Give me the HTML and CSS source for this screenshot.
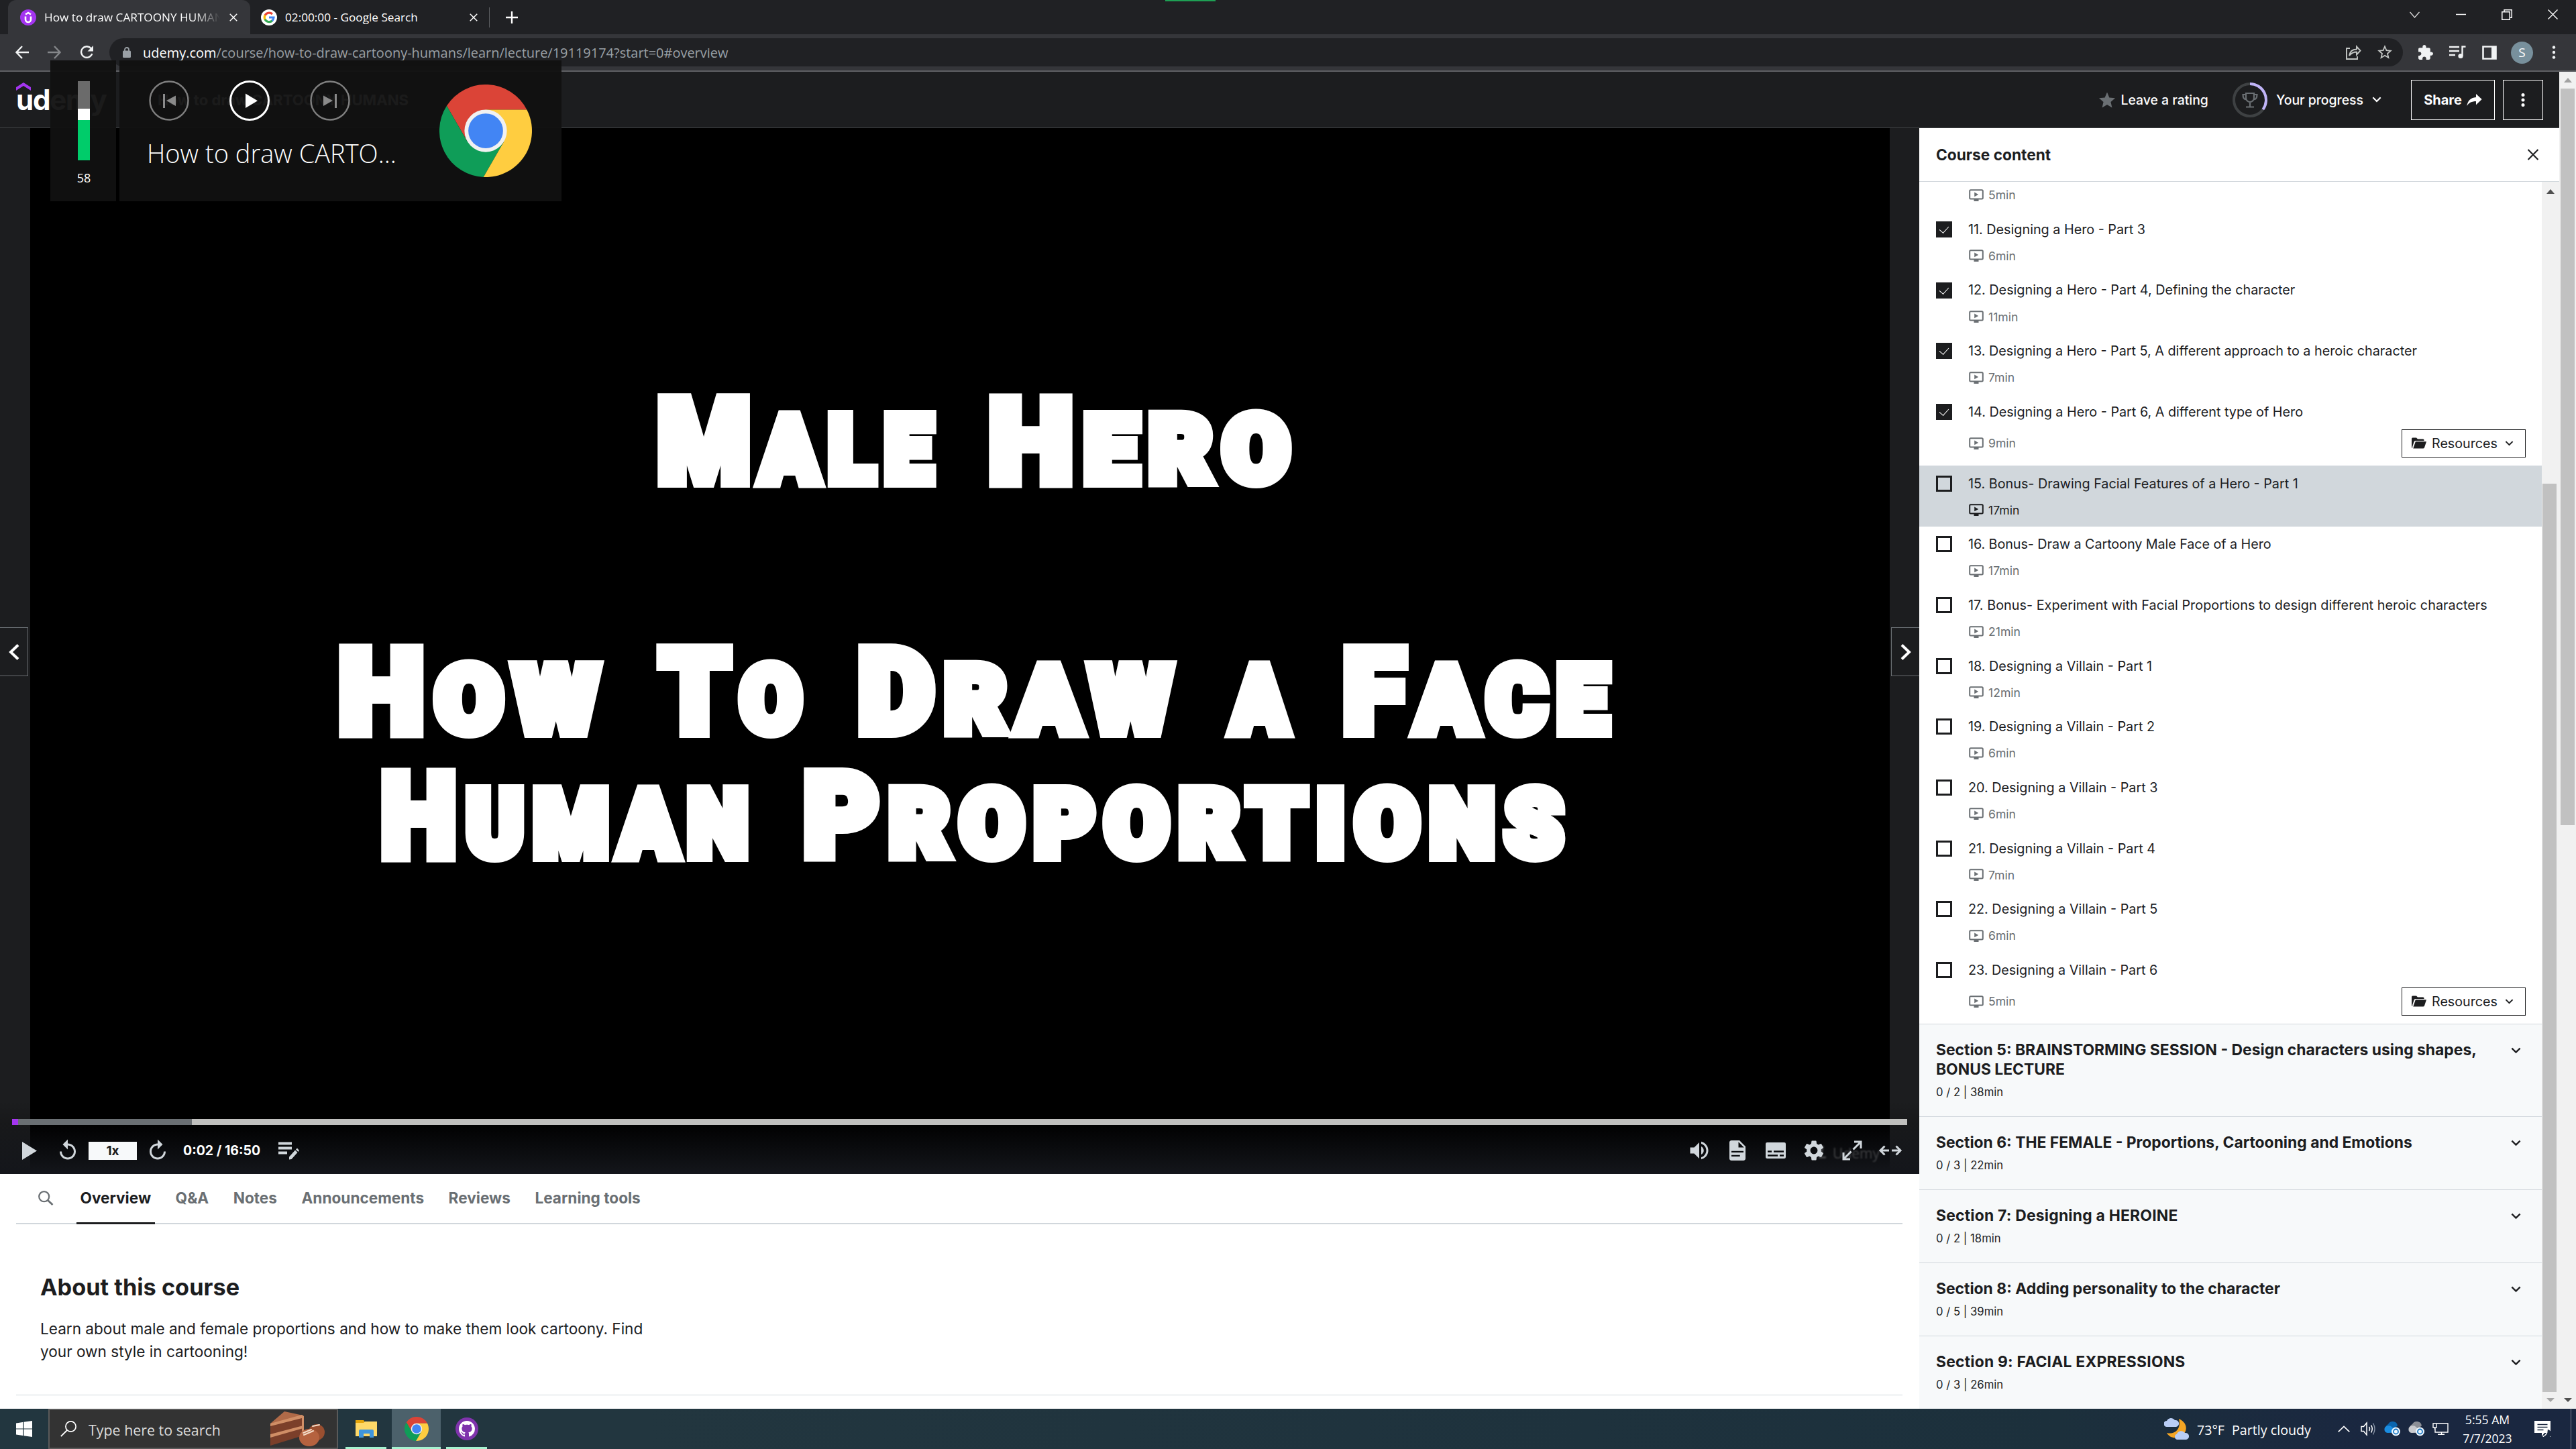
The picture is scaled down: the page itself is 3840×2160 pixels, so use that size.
FILE: index.html
```html
<!DOCTYPE html>
<html lang="en">
<head>
<meta charset="utf-8">
<title>How to draw CARTOONY HUMANS</title>
<link rel="stylesheet" href="styles.css">
</head>
<body>
<svg class="defs" width="0" height="0" aria-hidden="true">
  <symbol id="chrome" viewBox="-24 -24 48 48">
    <path fill="#db4437" d="M21.33-11A24 24 0 0 0-20.2-12.97L-9.53 5.5 0 0 0-11z"/>
    <path fill="#0f9d58" d="M-20.2-12.97A24 24 0 0 0-1.13 23.97L9.53 5.5 0 0-9.53 5.5z"/>
    <path fill="#ffcd40" d="M-1.13 23.97A24 24 0 0 0 21.33-11H0V0l9.53 5.5z"/>
    <circle r="11" fill="#f1f1f1"/><circle r="9" fill="#4285f4"/>
  </symbol>
  <symbol id="lecture" viewBox="0 0 22 18"><rect x="1.2" y="1.2" width="19.6" height="13.2" rx="1.5" fill="none" stroke="currentColor" stroke-width="2"/><path d="M8.2 4.5v6.800l6-3.400zM7.500 15h7v3h-7z" fill="currentColor"/></symbol>
  <symbol id="chev" viewBox="0 0 14 9"><path d="M1.3 1.3 7 7l5.700-5.700" fill="none" stroke="currentColor" stroke-width="2.200"/></symbol>
  <symbol id="folder" viewBox="0 0 22 17"><path fill="currentColor" d="M0 15V2Q0 .5 1.500 .5H7l2 2h8q1.500 0 1.500 1.500v1H5.500Q4.200 5 3.600 6.500L1.200 14v2zM5.800 6.300H22L19 15.200Q18.500 16.500 17 16.500H2.300z"/></symbol>
  <symbol id="cross" viewBox="0 0 16 16"><path d="M1 1l14 14M15 1 1 15" fill="none" stroke="currentColor" stroke-width="2"/></symbol>
  <symbol id="replay" viewBox="0 0 24 24"><path fill="currentColor" d="M12 5V1L7 6l5 5V7c3.310 0 6 2.690 6 6s-2.690 6-6 6-6-2.690-6-6H4c0 4.420 3.580 8 8 8s8-3.580 8-8-3.580-8-8-8z"/></symbol>
</svg>

<div class="browser">
  <div class="tabstrip">
    <div class="tab active">
      <svg class="fav" viewBox="0 0 24 24"><circle cx="12" cy="12" r="12" fill="#a435f0"/><path d="M8 7.500 12 5l4 2.500M8 10.500V15a4 4 0 0 0 8 0V10.500" fill="none" stroke="#fff" stroke-width="2.600"/></svg>
      <span class="tab-title fade">How to draw CARTOONY HUMANS</span>
      <svg class="x"><use href="#cross"/></svg>
    </div>
    <div class="tab">
      <svg class="fav" viewBox="0 0 24 24"><circle cx="12" cy="12" r="12" fill="#fff"/><g fill="none" stroke-width="3.200"><path d="M6 9a7 7 0 0 1 11-2" stroke="#ea4335"/><path d="M6.200 15.500a7 7 0 0 1 0-7" stroke="#fbbc05"/><path d="M17 16.800a7 7 0 0 1-11-2" stroke="#34a853"/><path d="M12 12h7a7 7 0 0 1-2.300 5" stroke="#4285f4"/></g></svg>
      <span class="tab-title">02:00:00 - Google Search</span>
      <svg class="x"><use href="#cross"/></svg>
    </div>
    <svg class="plus" viewBox="0 0 18 18"><path d="M9 0v18M0 9h18" stroke="#fff" stroke-width="2.400"/></svg>
    <div class="window-buttons">
      <svg width="15" height="10" viewBox="0 0 15 10"><path d="M.5 1 7.500 9l7-8" fill="none" stroke="#ddd" stroke-width="1.300"/></svg>
      <svg width="15" height="15" viewBox="0 0 15 15"><path d="M0 7.500h15" stroke="#fff" stroke-width="1.500"/></svg>
      <svg width="16" height="16" viewBox="0 0 16 16"><path d="M.8 3.800h11.400v11.400H.8zM4 3.500V.8h11.200v11.400H12.500" fill="none" stroke="#fff" stroke-width="1.500"/></svg>
      <svg width="15" height="15" viewBox="0 0 15 15"><path d="M.5.5l14 14M14.500.5l-14 14" stroke="#fff" stroke-width="1.400"/></svg>
    </div>
  </div>
  <div class="toolbar">
    <svg class="nav-ic" viewBox="0 0 20 20"><path d="M20 10H2M10 1 1.500 10 10 19" fill="none" stroke="#f1f3f4" stroke-width="2.400"/></svg>
    <svg class="nav-ic" viewBox="0 0 20 20"><path d="M0 10h18M10 1l8.500 9L10 19" fill="none" stroke="#85878a" stroke-width="2.400"/></svg>
    <svg class="nav-ic" viewBox="0 0 20 20"><path d="M16.800 4.200A8.300 8.300 0 1 0 18.300 12" fill="none" stroke="#f1f3f4" stroke-width="2.400"/><path d="M20 0v8.500h-8.500z" fill="#f1f3f4"/></svg>
    <div class="omnibox">
      <svg class="lock" viewBox="0 0 12 16"><rect y="5.500" width="12" height="10.500" rx="1.500" fill="#9aa0a6"/><path d="M3 6V4a3 3 0 0 1 6 0v2" fill="none" stroke="#9aa0a6" stroke-width="1.800"/></svg>
      <span class="url"><b>udemy.com</b>/course/how-to-draw-cartoony-humans/learn/lecture/19119174?start=0#overview</span>
      <svg class="om-ic" viewBox="0 0 24 24"><path d="M7 6H2v16h16v-4M6 17c1-7 5-9.500 11-9.500V3.500l5.500 6-5.500 6v-4C12 11.500 9 13 6 17z" fill="none" stroke="#c4c7c5" stroke-width="1.900"/></svg>
      <svg class="om-ic star" viewBox="1 1 22 22"><path fill="#c4c7c5" d="M22 9.240l-7.190-.62L12 2 9.190 8.630 2 9.240l5.460 4.730L5.820 21 12 17.270 18.180 21l-1.630-7.030L22 9.240zM12 15.400l-3.760 2.270 1-4.280-3.320-2.880 4.380-.38L12 6.100l1.710 4.040 4.380.38-3.320 2.880 1 4.280L12 15.400z"/></svg>
    </div>
    <div class="ext">
      <svg width="24" height="24" viewBox="1 0 23 23"><path fill="#f1f3f4" d="M20.500 11H19V7c0-1.100-.9-2-2-2h-4V3.500C13 2.120 11.880 1 10.500 1S8 2.120 8 3.500V5H4c-1.100 0-1.990.9-1.990 2v3.800H3.500c1.490 0 2.700 1.210 2.700 2.700s-1.210 2.700-2.700 2.700H2V20c0 1.100.9 2 2 2h3.800v-1.500c0-1.490 1.210-2.700 2.700-2.700 1.490 0 2.700 1.210 2.700 2.700V22H17c1.100 0 2-.9 2-2v-4h1.500c1.380 0 2.500-1.120 2.500-2.500S21.880 11 20.500 11z"/></svg>
      <svg width="25" height="20" viewBox="0 0 25 20"><path d="M0 2h15M0 8h15M0 14h9M24.500 1.500H19.500V15" fill="none" stroke="#f1f3f4" stroke-width="2.400"/><circle cx="17" cy="15.500" r="3.600" fill="#f1f3f4"/></svg>
      <svg width="22" height="21" viewBox="0 0 22 21"><path d="M1.500 1.500h19v18h-19z" fill="none" stroke="#f1f3f4" stroke-width="2.600"/><path d="M14 1h7v19h-7z" fill="#f1f3f4"/></svg>
      <span class="avatar">S</span>
      <svg width="6" height="20" viewBox="0 0 6 20"><g fill="#f1f3f4"><circle cx="3" cy="2.500" r="2.200"/><circle cx="3" cy="10" r="2.200"/><circle cx="3" cy="17.500" r="2.200"/></g></svg>
    </div>
  </div>
</div>

<div class="viewport">
  <div class="page">
    <header class="course-header">
      <div class="logo">udemy<svg class="hat" viewBox="0 0 22 12"><path d="M0 12V7L11 0l11 7v5L11 5z" fill="#a435f0"/></svg></div>
      <div class="course-title">How to draw CARTOONY HUMANS</div>
      <div class="rating"><svg width="24" height="24" viewBox="2 1.500 20 20"><path fill="#6a6f73" d="M12 17.270L18.180 21l-1.640-7.030L22 9.240l-7.190-.61L12 2 9.190 8.630 2 9.240l5.460 4.730L5.820 21z"/></svg>Leave a rating</div>
      <div class="progress"><svg width="52" height="52" viewBox="-26 -26 52 52"><circle r="24" fill="none" stroke="#3e4143" stroke-width="4"/><path d="M0-24A24 24 0 0 1 19.400 14.100" fill="none" stroke="#c0b4f7" stroke-width="4"/><path d="M-6-10H6V-3a6 6 0 0 1-12 0zM-6-8h-4.500q0 7.500 5.500 7.500M6-8h4.500q0 7.500-5.500 7.500M0 3v7M-6 10.500H6" fill="none" stroke="#6a6f73" stroke-width="2.200"/></svg>Your progress<svg class="chev-p" width="14" height="9"><use href="#chev"/></svg></div>
      <div class="btn share">Share<svg width="23" height="18" viewBox="3 5 18 14.500"><path fill="#fff" d="M14 9V5l7 6.500-7 6.500v-4.100c-5 0-8.500 1.600-11 5.600 1-6 4-10 11-10.500z"/></svg></div>
      <div class="btn more"><svg width="6" height="20" viewBox="0 0 6 20"><g fill="#fff"><circle cx="3" cy="2.500" r="2.500"/><circle cx="3" cy="10" r="2.500"/><circle cx="3" cy="17.500" r="2.500"/></g></svg></div>
    </header>
    <div class="columns">
      <main class="left">
        <section class="player">
          <svg class="stage" viewBox="0 0 2861 1559">
            <rect x="45" width="2772" height="1559" fill="#000"/>
            <g class="lettering">
              <text x="980" y="527" textLength="425" lengthAdjust="spacingAndGlyphs">M<tspan class="sm">ALE</tspan></text>
              <text x="1474" y="527" textLength="465" lengthAdjust="spacingAndGlyphs">H<tspan class="sm">ERO</tspan></text>
              <text x="505" y="900" textLength="404" lengthAdjust="spacingAndGlyphs">H<tspan class="sm">OW</tspan></text>
              <text x="984" y="900" textLength="226" lengthAdjust="spacingAndGlyphs">T<tspan class="sm">O</tspan></text>
              <text x="1279" y="900" textLength="484" lengthAdjust="spacingAndGlyphs">D<tspan class="sm">RAW</tspan></text>
              <text x="1836" y="900" textLength="98" lengthAdjust="spacingAndGlyphs"><tspan class="sm">A</tspan></text>
              <text x="2002" y="900" textLength="411" lengthAdjust="spacingAndGlyphs">F<tspan class="sm">ACE</tspan></text>
              <text x="568" y="1085" textLength="562" lengthAdjust="spacingAndGlyphs">H<tspan class="sm">UMAN</tspan></text>
              <text x="1198" y="1085" textLength="1148" lengthAdjust="spacingAndGlyphs">P<tspan class="sm">ROPORTIONS</tspan></text>
            </g>
          </svg>
          <div class="go prev"><svg viewBox="0 0 16 24"><path d="M14 1.500 3 12l11 10.500" fill="none" stroke="#fff" stroke-width="4"/></svg></div>
          <div class="go next"><svg viewBox="0 0 16 24"><path d="M2 1.500 13 12 2 22.500" fill="none" stroke="#fff" stroke-width="4"/></svg></div>
          <div class="controls">
            <span class="watermark"><b>L</b>Udemy</span>
            <div class="bar"><i class="played"></i><i class="buffered"></i></div>
            <div class="row">
              <svg class="play" viewBox="0 0 22 27"><path d="M0 0v27l22-13.500z" fill="#d1d7dc"/></svg>
              <svg class="c36 back"><use href="#replay"/></svg>
              <span class="rate">1x</span>
              <svg class="c36 fwd"><use href="#replay"/></svg>
              <span class="time">0:02 / 16:50</span>
              <svg class="note" viewBox="0 0 31 27"><path d="M0 2.500h20M0 9.500h20M0 16.500h13" stroke="#d1d7dc" stroke-width="4"/><path d="M16 26.500v-4l9-10 3.500 3.500-9 10zM26 11.500l2-2 3 3.500-1.500 2z" fill="#d1d7dc"/></svg>
              <div class="right-controls">
                <svg class="c36" viewBox="0 0 24 24"><path fill="#d1d7dc" d="M3 9v6h4l5 5V4L7 9H3zm13.500 3c0-1.770-1.020-3.290-2.500-4.030v8.050c1.480-.73 2.500-2.250 2.500-4.020zM14 3.230v2.060c2.890.86 5 3.540 5 6.710s-2.110 5.850-5 6.710v2.060c4.010-.91 7-4.490 7-8.770s-2.990-7.860-7-8.770z"/></svg>
                <svg class="c36" viewBox="0 0 24 24"><path fill="#d1d7dc" d="M14 2H6c-1.100 0-2 .9-2 2v16c0 1.100.89 2 2 2h12c1.100 0 2-.9 2-2V8l-6-6zM14.500 18H6v-1.500h8.500zM18 14H6v-1.500h12zm-5-5V3.500L18.500 9H13z"/></svg>
                <svg class="c36" viewBox="0 0 24 24"><rect x="2" y="4" width="20" height="16" rx="1.500" fill="#d1d7dc"/><path d="M4 13h4M10 13h10M4 17h10M16 17h4" stroke="#0b0c0f" stroke-width="1.800"/></svg>
                <svg class="c36" viewBox="0 0 24 24"><path fill="#d1d7dc" d="M19.140 12.940c.04-.3.06-.61.06-.94 0-.32-.02-.64-.07-.94l2.030-1.580c.18-.14.23-.41.12-.61l-1.920-3.320c-.12-.22-.37-.29-.59-.22l-2.390.96c-.5-.38-1.030-.7-1.620-.94l-.36-2.540c-.04-.24-.24-.41-.48-.41h-3.840c-.24 0-.43.17-.47.41l-.36 2.540c-.59.24-1.130.57-1.620.94l-2.390-.96c-.22-.08-.47 0-.59.22L2.740 8.870c-.12.21-.08.47.12.61l2.030 1.580c-.05.3-.09.63-.09.94s.02.64.07.94l-2.030 1.580c-.18.14-.23.41-.12.61l1.920 3.320c.12.22.37.29.59.22l2.390-.96c.5.38 1.030.7 1.620.94l.36 2.540c.05.24.24.41.48.41h3.840c.24 0 .44-.17.47-.41l.36-2.540c.59-.24 1.130-.56 1.620-.94l2.390.96c.22.08.47 0 .59-.22l1.920-3.320c.12-.22.07-.47-.12-.61l-2.010-1.580zM12 15.600c-1.980 0-3.600-1.620-3.600-3.600s1.620-3.600 3.600-3.600 3.600 1.620 3.600 3.600-1.620 3.600-3.600 3.600z"/></svg>
                <svg class="c36" viewBox="0 0 36 36"><path d="M21 5h10v10M30.500 5.500 19.500 16.500M15 31H5V21M5.500 30.500l11-11" fill="none" stroke="#d1d7dc" stroke-width="3"/></svg>
                <svg class="c36" viewBox="0 0 36 36"><path d="M16 18H4M9.500 11.500 3 18l6.500 6.500M20 18h12M26.500 11.500 33 18l-6.500 6.500" fill="none" stroke="#d1d7dc" stroke-width="3"/></svg>
              </div>
            </div>
          </div>
        </section>
        <nav class="tabs">
          <svg class="search" viewBox="0 0 23 22"><circle cx="8.700" cy="8.700" r="7.500" fill="none" stroke="#6a6f73" stroke-width="2.200"/><path d="m14 14 7.500 7" stroke="#6a6f73" stroke-width="2.800"/></svg>
          <a class="on">Overview</a><a>Q&amp;A</a><a>Notes</a><a>Announcements</a><a>Reviews</a><a>Learning tools</a>
        </nav>
        <section class="about">
          <h2>About this course</h2>
          <p>Learn about male and female proportions and how to make them look cartoony. Find<br>your own style in cartooning!</p>
        </section>
      </main>
      <aside class="sidebar">
        <div class="side-head">Course content<svg width="18" height="17"><use href="#cross"/></svg></div>
        <div class="side-body">
          <div class="list">
            <div class="item first"><div class="txt"><div class="meta"><svg class="lec"><use href="#lecture"/></svg>5min</div></div></div>
            <div class="item"><i class="box done"></i><div class="txt"><div class="name">11. Designing a Hero - Part 3</div><div class="meta"><svg class="lec"><use href="#lecture"/></svg>6min</div></div></div>
            <div class="item"><i class="box done"></i><div class="txt"><div class="name">12. Designing a Hero - Part 4, Defining the character</div><div class="meta"><svg class="lec"><use href="#lecture"/></svg>11min</div></div></div>
            <div class="item"><i class="box done"></i><div class="txt"><div class="name">13. Designing a Hero - Part 5, A different approach to a heroic character</div><div class="meta"><svg class="lec"><use href="#lecture"/></svg>7min</div></div></div>
            <div class="item"><i class="box done"></i><div class="txt"><div class="name">14. Designing a Hero - Part 6, A different type of Hero</div><div class="meta tall"><svg class="lec"><use href="#lecture"/></svg>9min<span class="res"><svg width="22" height="17"><use href="#folder"/></svg>Resources<svg class="rc"><use href="#chev"/></svg></span></div></div></div>
            <div class="item current"><i class="box"></i><div class="txt"><div class="name">15. Bonus- Drawing Facial Features of a Hero - Part 1</div><div class="meta"><svg class="lec"><use href="#lecture"/></svg>17min</div></div></div>
            <div class="item"><i class="box"></i><div class="txt"><div class="name tight">16. Bonus- Draw a Cartoony Male Face of a Hero</div><div class="meta"><svg class="lec"><use href="#lecture"/></svg>17min</div></div></div>
            <div class="item"><i class="box"></i><div class="txt"><div class="name wide">17. Bonus- Experiment with Facial Proportions to design different heroic characters</div><div class="meta"><svg class="lec"><use href="#lecture"/></svg>21min</div></div></div>
            <div class="item"><i class="box"></i><div class="txt"><div class="name">18. Designing a Villain - Part 1</div><div class="meta"><svg class="lec"><use href="#lecture"/></svg>12min</div></div></div>
            <div class="item"><i class="box"></i><div class="txt"><div class="name">19. Designing a Villain - Part 2</div><div class="meta"><svg class="lec"><use href="#lecture"/></svg>6min</div></div></div>
            <div class="item"><i class="box"></i><div class="txt"><div class="name">20. Designing a Villain - Part 3</div><div class="meta"><svg class="lec"><use href="#lecture"/></svg>6min</div></div></div>
            <div class="item"><i class="box"></i><div class="txt"><div class="name">21. Designing a Villain - Part 4</div><div class="meta"><svg class="lec"><use href="#lecture"/></svg>7min</div></div></div>
            <div class="item"><i class="box"></i><div class="txt"><div class="name">22. Designing a Villain - Part 5</div><div class="meta"><svg class="lec"><use href="#lecture"/></svg>6min</div></div></div>
            <div class="item"><i class="box"></i><div class="txt"><div class="name">23. Designing a Villain - Part 6</div><div class="meta tall"><svg class="lec"><use href="#lecture"/></svg>5min<span class="res"><svg width="22" height="17"><use href="#folder"/></svg>Resources<svg class="rc"><use href="#chev"/></svg></span></div></div></div>
            <div class="sec"><div><h3>Section 5: BRAINSTORMING SESSION - Design characters using shapes,<br>BONUS LECTURE</h3><p>0 / 2 | 38min</p></div><svg class="sc"><use href="#chev"/></svg></div>
            <div class="sec"><div><h3>Section 6: THE FEMALE - Proportions, Cartooning and Emotions</h3><p>0 / 3 | 22min</p></div><svg class="sc"><use href="#chev"/></svg></div>
            <div class="sec"><div><h3 class="wide7">Section 7: Designing a HEROINE</h3><p>0 / 2 | 18min</p></div><svg class="sc"><use href="#chev"/></svg></div>
            <div class="sec"><div><h3>Section 8: Adding personality to the character</h3><p>0 / 5 | 39min</p></div><svg class="sc"><use href="#chev"/></svg></div>
            <div class="sec"><div><h3 class="wide7">Section 9: FACIAL EXPRESSIONS</h3><p>0 / 3 | 26min</p></div><svg class="sc"><use href="#chev"/></svg></div>
          </div>
          <div class="scroll inner"><i class="up dark"></i><i class="thumb"></i><i class="down"></i></div>
        </div>
      </aside>
    </div>
  </div>
  <div class="scroll outer"><i class="up"></i><i class="thumb"></i><i class="down dark"></i></div>
</div>

<div class="taskbar">
  <svg class="start" viewBox="0 0 24 24"><path fill="#fff" d="M0 3.500 10 2v9.400H0zM11.300 1.800 24 0v11.400H11.300zM0 12.600h10V22L0 20.500zM11.300 12.600H24V24l-12.700-1.800z"/></svg>
  <div class="tsearch">
    <svg class="mag" viewBox="0 0 24 24"><circle cx="15.500" cy="8.500" r="7.600" fill="none" stroke="#fff" stroke-width="1.700"/><path d="M10 14 .8 23.200" stroke="#fff" stroke-width="1.800"/></svg>
    <span>Type here to search</span>
    <svg class="cake" viewBox="0 0 83 52"><path fill="#b06a48" d="M1 18 22 0 50 6 1 24z"/><path fill="#7b3f2a" d="M1 21 50 8v28L1 51z"/><path fill="#d08e66" d="M1 18 48 5l3 2v30l-3 1V10L1 22zM1 34l49-13v4L1 39z"/><ellipse cx="70" cy="31" rx="12" ry="12" fill="#9a4f30"/><ellipse cx="59" cy="39" rx="15" ry="13" fill="#b5623f"/><path d="m50 32 12-5M51 35l14-6M64 22l10-2" stroke="#f4dcc8" stroke-width="2" stroke-linecap="round"/></svg>
  </div>
  <div class="app w61"><svg width="32" height="26" viewBox="0 0 32 26"><path fill="#e5a50a" d="M0 0h12l2 3v3H0z"/><path fill="#ffd968" d="M0 4h12l2-2h18v22H0z"/><path fill="#3f95dc" d="M5 26V16q0-2 2-2h18q2 0 2 2v10h-6v-6h-9v6z"/></svg></div>
  <div class="app w73"><svg width="36" height="36"><use href="#chrome"/></svg></div>
  <div class="app w61"><svg width="34" height="34" viewBox="0 0 34 34"><circle cx="17" cy="17" r="17" fill="#7f33ac"/><path transform="translate(5 5) scale(1.500)" fill="#fff" d="M8 0C3.580 0 0 3.580 0 8c0 3.540 2.290 6.530 5.470 7.590.4.070.55-.17.55-.38 0-.19-.01-.82-.01-1.490-2.010.37-2.530-.49-2.690-.94-.09-.23-.48-.94-.82-1.130-.28-.15-.68-.52-.01-.53.63-.01 1.080.58 1.230.82.72 1.210 1.870.87 2.330.66.070-.52.28-.87.51-1.070-1.780-.2-3.640-.89-3.640-3.950 0-.87.31-1.590.82-2.150-.08-.2-.36-1.020.08-2.120 0 0 .67-.21 2.200.82.64-.18 1.320-.27 2-.27.68 0 1.360.09 2 .27 1.530-1.040 2.200-.82 2.200-.82.44 1.100.16 1.920.08 2.120.51.56.82 1.270.82 2.150 0 3.070-1.870 3.750-3.650 3.950.29.25.54.73.54 1.480 0 1.070-.01 1.930-.01 2.200 0 .21.15.46.55.38A8.013 8.013 0 0 0 16 8c0-4.420-3.580-8-8-8z"/></svg></div>
  <div class="tray">
    <svg class="weather" viewBox="0 0 37 34"><path d="M22 2c12 5 14 17 6 24s-20 5-24-3c12 3 22-6 18-21z" fill="#f5a524"/><g fill="#b9cdf5"><path d="M4 14a4.500 4.500 0 0 1 0-9 7 7 0 0 1 12-1 5 5 0 0 1 2 10z"/><path d="M19 33a4.500 4.500 0 0 1 0-8.500 7 7 0 0 1 12-1.500 5 5 0 0 1 2 10z"/></g></svg>
    <span class="temp">73°F</span><span class="cond">Partly cloudy</span>
    <svg class="caret" viewBox="0 0 18 10"><path d="m.7 9.300 8.300-8 8.300 8" fill="none" stroke="#fff" stroke-width="1.600"/></svg>
    <svg class="spk" viewBox="0 0 22 22"><path d="M1 7.500h3.500L9 2v18l-4.500-5.500H1zM12.500 8q2 3 0 6M15.500 5.500q3.500 5.500 0 11" fill="none" stroke="#fff" stroke-width="1.500"/><path d="M18.500 2.500q5 8.500 0 17" fill="none" stroke="#8793a5" stroke-width="1.400"/></svg>
    <svg class="od" viewBox="0 0 24 24"><path fill="#0a64ad" d="M5 14a5 5 0 0 1 1-9A7.500 7.500 0 0 1 20 7l-8 8z"/><path fill="#1a8ce0" d="M5 18a5.300 5.300 0 0 1 0-10.500q4-1 7 2l7 8z"/><circle cx="17.500" cy="16" r="6.500" fill="#eef6fd"/><circle cx="17.500" cy="16" r="3.500" fill="none" stroke="#1a78c4" stroke-width="1.800"/></svg>
    <svg class="od" viewBox="0 0 24 24"><path fill="#8c8f96" d="M5 14a5 5 0 0 1 1-9A7.500 7.500 0 0 1 20 7l-8 8z"/><path fill="#c9cace" d="M5 18a5.300 5.300 0 0 1 0-10.500q4-1 7 2l7 8z"/><circle cx="17.500" cy="16" r="6.500" fill="#eef6fd"/><circle cx="17.500" cy="16" r="3.500" fill="none" stroke="#1a78c4" stroke-width="1.800"/></svg>
    <svg class="mon" viewBox="0 0 24 18"><path d="M6 1h17v13H4V8M13.500 14v3M8 17.300h10M1 1h5v6H1zM3.500 7v3" fill="none" stroke="#fff" stroke-width="1.400"/></svg>
    <div class="clock">5:55 AM<br>7/7/2023</div>
    <svg class="notif" viewBox="0 0 24 24"><path d="M0 0h24v18h-9l-4 5v-5H0z" fill="#fff"/><path d="M4.500 5.500h15M4.500 9.500h15M4.500 13.500h9" stroke="#1b2840" stroke-width="1.500"/><path d="M19 12a7 7 0 1 1-6 11q7-2 6-11z" fill="#1b2840" stroke="#fff" stroke-width="1.300"/></svg>
    <i class="peek"></i>
  </div>
</div>

<div class="green-tick"></div>
<div class="media-flyout">
  <div class="vol"><div class="slider"><i class="rest"></i><i class="knob"></i><i class="level"></i></div><span>58</span></div>
  <div class="media">
    <div class="media-l">
      <div class="btns">
        <svg viewBox="-30 -30 60 60"><circle r="28.500" fill="none" stroke="#7f7f7f" stroke-width="2.400"/><path d="M-9-10h3v21h-3zM10-7.500V8L-4 0z" fill="#8a8a8a"/></svg>
        <svg viewBox="-30 -30 60 60"><circle r="28.500" fill="none" stroke="#fff" stroke-width="3"/><path d="M-6-10.500V11L12 .3z" fill="#fff"/></svg>
        <svg viewBox="-30 -30 60 60"><circle r="28.500" fill="none" stroke="#7f7f7f" stroke-width="2.400"/><path d="M7-10h3v21H7zM-10-7.500V8L4 0z" fill="#8a8a8a"/></svg>
      </div>
      <div class="track">How to draw CARTO...</div>
    </div>
    <svg class="big" width="138" height="138"><use href="#chrome"/></svg>
  </div>
</div>
</body>
</html>
```
FILE: styles.css
```css
* { box-sizing: border-box; }
body { margin: 0; width: 3840px; height: 2160px; overflow: hidden; display: flex; flex-direction: column; position: relative; background: #fff; color: #1c1d1f; font-family: Inter, "Liberation Sans", sans-serif; }
svg { display: block; flex: none; }
.defs { position: absolute; }
h2, h3, p { margin: 0; }

/* browser chrome */
.browser { flex: none; font-family: "Open Sans", "Noto Sans", sans-serif; color: #fff; }
.tabstrip { height: 51px; background: #202124; display: flex; align-items: center; padding-left: 12px; }
.tab { height: 51px; width: 359px; display: flex; align-items: center; padding: 0 19px 0 18px; font-size: 17.2px; }
.tab.active { width: 361px; background: #35363a; border-radius: 12px 12px 0 0; }
.tab + .tab { border-right: 1.5px solid #4d4f54; border-image: linear-gradient(transparent 22%, #5b5d61 22%, #5b5d61 80%, transparent 80%) 1; padding-left: 16px; padding-right: 17px; width: 357px; }
.fav { width: 24px; height: 24px; margin-right: 12px; }
.tab-title { flex: 1; white-space: nowrap; overflow: hidden; line-height: 28px; }
.fade { margin-right: 14px; -webkit-mask-image: linear-gradient(90deg, #000 85%, transparent); mask-image: linear-gradient(90deg, #000 85%, transparent); }
.x { width: 12px; height: 12px; }
.plus { width: 18px; height: 18px; margin-left: 24px; }
.window-buttons { margin-left: auto; display: flex; align-items: center; gap: 53px; padding-right: 27px; height: 43px; align-self: flex-start; }
.window-buttons svg:first-child { margin-right: 1px; }
.toolbar { height: 56px; background: #35363a; border-bottom: 2px solid #5f6064; display: flex; align-items: center; padding-left: 23px; }
.nav-ic { width: 20px; height: 20px; margin-right: 28px; }
.nav-ic:nth-child(3) { margin-right: 24px; }
.omnibox { width: 3419px; height: 42px; border-radius: 21px; background: #202124; display: flex; align-items: center; padding: 0 15px 0 20px; }
.lock { width: 12px; height: 16px; margin-right: 18px; }
.url { font-size: 19.98px; color: #9aa0a6; flex: 1; line-height: 30px; padding-top: 1px; }
.url b { font-weight: 400; color: #fff; }
.om-ic { width: 24px; height: 24px; margin-left: 23px; }
.ext { display: flex; align-items: center; padding-left: 22px; }
.ext svg:nth-child(2) { margin: 0 24px 0 23px; }
.avatar { width: 33px; height: 33px; border-radius: 50%; background: #78909c; margin: 0 28px 0 21px; font-size: 19px; line-height: 32px; text-align: center; }

/* page */
.viewport { height: 1993px; display: flex; }
.page { width: 3815px; display: flex; flex-direction: column; }
.course-header { height: 84px; background: #1c1d1f; border-bottom: 1px solid #3e4143; color: #fff; display: flex; align-items: center; padding: 0 24px; font-size: 19.4px; font-weight: 500; }
.logo { width: 136px; font-size: 42px; font-weight: 700; letter-spacing: -1.2px; line-height: 50px; position: relative; margin-right: 75px; }
.hat { position: absolute; left: 0; top: -1px; width: 22px; height: 12px; }
.course-title { font-size: 22.1px; font-weight: 700; flex: 1; }
.rating { display: flex; align-items: center; gap: 9px; margin-right: 36px; }
.progress { display: flex; align-items: center; gap: 13px; margin-right: 44px; }
.rating { margin-left: -2px; }
.btn { height: 60px; border: 1px solid #fff; display: flex; align-items: center; justify-content: center; }
.share { width: 125px; gap: 7px; font-weight: 700; font-size: 20px; margin-right: 12px; }
.more { width: 60px; }
.columns { display: flex; height: 1909px; }
.left { width: 2861px; }

.player { position: relative; height: 1559px; background: #1c1d1f; overflow: hidden; }
.stage { width: 2861px; height: 1559px; }
.lettering { fill: #fff; stroke: #fff; stroke-width: 18; stroke-linejoin: miter; stroke-miterlimit: 2; font: 900 172px Roboto, sans-serif; letter-spacing: 17px; }
.lettering .sm { font-size: 137px; }
.go { position: absolute; top: 744px; width: 43px; height: 73px; border: 1px solid #6a6f73; background: #1c1d1f; display: flex; align-items: center; justify-content: center; }
.go svg { width: 16px; height: 24px; }
.prev { left: -1px; }
.next { right: -1px; }
.controls { position: absolute; left: 0; right: 0; bottom: 0; height: 110px; background: linear-gradient(rgba(0,0,0,0) 0, rgba(0,0,0,.15) 30%, #14161b 100%); }
.bar { margin: 28px 18px 0; height: 9px; background: #c0c0be; display: flex; }
.played { width: 9px; background: #a435f0; }
.buffered { width: 259px; background: #6a6f73; }
.row { position: relative; height: 36px; margin-top: 20px; padding: 0 25px 0 33px; display: flex; align-items: center; }
.play { width: 22px; height: 27px; margin-right: 28px; }
.c36 { width: 36px; height: 36px; color: #d1d7dc; }
.rate { width: 72px; height: 27px; margin: 0 13px; background: #f7f9fa; color: #1c1d1f; font-size: 19px; font-weight: 700; line-height: 27px; text-align: center; }
.fwd { transform: scaleX(-1); }
.time { margin: 0 27px 0 20px; width: 115px; color: #fff; font-size: 19.5px; font-weight: 700; white-space: nowrap; }
.note { width: 31px; height: 27px; }
.right-controls { margin-left: auto; display: flex; gap: 21px; }
.watermark { position: absolute; right: 59px; bottom: 16px; font: 500 21px/30px "Open Sans", sans-serif; color: #fff; opacity: .2; filter: blur(1px); }
.watermark b { font-size: 26px; font-style: italic; margin-right: 8px; }

.tabs { height: 75px; margin: 0 25px 0 24px; border-bottom: 2px solid #d1d7dc; display: flex; align-items: flex-start; padding-left: 33px; gap: 24.5px; font-size: 22.6px; font-weight: 700; color: #6a6f73; }
.tabs a { line-height: 72px; height: 75px; padding: 0 6px; }
.tabs .on { color: #1c1d1f; border-bottom: 3px solid #1c1d1f; }
.search { width: 23px; height: 22px; margin: 25px 9px 0 0; }
.about { margin: 0 25px 0 24px; padding: 72px 36px 47px; border-bottom: 1px solid #d1d7dc; }
.about h2 { font-size: 34.3px; line-height: 44px; }
.about p { margin-top: 23px; font-size: 22.59px; line-height: 34px; }

/* course content */
.sidebar { width: 954px; background: #fff; }
.side-head { height: 80px; border-bottom: 1px solid #d1d7dc; display: flex; align-items: center; justify-content: space-between; padding: 0 30px 0 25px; font-size: 22.7px; font-weight: 700; }
.side-body { height: 1829px; display: flex; overflow: hidden; }
.list { width: 928px; overflow: hidden; }
.item { display: flex; gap: 24px; padding: 12.8px 24px 12px 25px; }
.item.first { padding: 6.3px 24px 12px 74px; }
.box { flex: none; width: 24px; height: 24px; margin-top: 2.2px; border: 3px solid #1c1d1f; }
.done { background: #1c1d1f; display: flex; align-items: center; justify-content: center; }
.done::after { content: ""; width: 7px; height: 12px; margin-top: -3px; border: solid #fff; border-width: 0 1.7px 1.7px 0; transform: rotate(42deg); flex: none; }
.txt { flex: 1; }
.name { font-size: 19.78px; line-height: 28px; margin-bottom: 12.2px; white-space: nowrap; }
.name.tight { letter-spacing: -.07px; }
.name.wide { letter-spacing: .04px; }
.meta { height: 25.67px; display: flex; align-items: center; font-size: 17.6px; color: #6a6f73; padding-top: 1.2px; }
.item:not(.first) .meta { padding-left: 1px; }
.meta.tall { height: 42px; padding-top: 0; }
.lec { width: 22px; height: 18px; margin-right: 7px; }
.current { background: #d1d7dc; }
.current .meta { color: #1c1d1f; }
.res { margin-left: auto; width: 185px; height: 42px; border: 1px solid #1c1d1f; display: flex; align-items: center; padding-left: 14px; gap: 8px; font-size: 19.7px; color: #1c1d1f; }
.rc { width: 13px; height: 8px; margin-left: 3px; }
.sec { background: #f7f9fa; border-top: 1px solid #d1d7dc; padding: 24px 31px 24px 25px; display: flex; justify-content: space-between; }
.sec h3 { font-size: 22.86px; line-height: 29px; white-space: nowrap; }
.sec .wide7 { letter-spacing: .22px; }
.sec p { margin-top: 7px; font-size: 16.7px; line-height: 24px; }
.sc { width: 15px; height: 10px; margin-top: 10px; }

.scroll { display: flex; flex-direction: column; align-items: center; background: #f1f1f1; }
.inner { width: 26px; height: 1829px; }
.outer { width: 25px; height: 1993px; }
.thumb { background: #c1c1c1; }
.inner .thumb { width: 21px; height: 1354px; margin: 432px 3px 0 0; }
.outer .thumb { width: 21px; height: 1098px; margin-top: 9px; }
.up, .down { width: 0; height: 0; border: 6px solid transparent; }
.up { border-top: 0; border-bottom: 7px solid #a3a3a3; }
.up.dark { border-bottom-color: #505050; margin: 11px 0 0; }
.outer .up { margin-top: 9px; }
.down { border-bottom: 0; border-top: 6px solid #a3a3a3; margin-top: 9px; }
.down.dark { border-top-color: #505050; margin-top: auto; margin-bottom: 10px; }

/* taskbar */
.taskbar { height: 60px; background: linear-gradient(90deg, #22363f 0, #22363f 25%, #1c303c 80%, #1a2740 92%); display: flex; align-items: center; padding-left: 24px; color: #fff; font-family: "Open Sans", "Noto Sans", sans-serif; }
.start { width: 24px; height: 24px; margin-right: 24px; }
.tsearch { width: 432px; height: 60px; background: #333; border: 2px solid #5a5a5a; display: flex; align-items: center; padding: 0 17px 0 16px; font-size: 21.4px; color: #dcdcdc; margin-right: 11px; }
.tsearch span { padding-top: 2px; }
.mag { width: 24px; height: 24px; margin-right: 18px; }
.cake { width: 83px; height: 52px; margin-left: auto; }
.app { height: 60px; display: flex; align-items: center; justify-content: center; border-bottom: 3px solid #a6f2cf; padding-top: 3px; }
.w61 { width: 61px; }
.w73 { width: 73px; margin: 0 8px; background: #4c616b; }
.tray { margin-left: auto; display: flex; align-items: center; height: 60px; }
.weather { width: 37px; height: 34px; margin-right: 12px; }
.temp { font-size: 19.6px; width: 52px; padding-top: 2px; }
.cond { font-size: 19.68px; width: 118px; white-space: nowrap; margin-right: 40px; padding-top: 2px; }
.caret { width: 18px; height: 10px; margin-right: 16px; }
.spk { width: 22px; height: 22px; margin-right: 13px; }
.od { width: 24px; height: 24px; margin-right: 12px; }
.mon { width: 24px; height: 18px; margin-right: 19px; }
.clock { width: 78px; text-align: center; font-size: 17.6px; line-height: 28px; margin-right: 31px; }
.notif { width: 24px; height: 24px; margin-right: 30px; }
.peek { width: 8px; height: 60px; border-left: 1px solid #7c8596; }

/* floating overlays */
.green-tick { position: absolute; left: 1737px; top: 0; width: 75px; height: 2px; background: #1ea054; }
.media-flyout { position: absolute; left: 75px; top: 90px; height: 210px; display: flex; gap: 5px; color: #fff; font-family: "Open Sans", "Noto Sans", sans-serif; }
.vol, .media { background: rgba(17, 17, 17, .955); }
.vol { width: 98px; display: flex; flex-direction: column; align-items: center; padding: 31px 0 0 2px; font-size: 18px; }
.slider { display: flex; flex-direction: column; align-items: center; margin-bottom: 14px; }
.slider i { width: 18px; }
.rest { height: 41px; background: #6b6b6b; }
.knob { height: 17px; background: #fff; }
.level { height: 60px; background: #00cc6a; }
.media { width: 659px; display: flex; }
.media-l { width: 477px; padding: 30px 0 0 44px; }
.btns { display: flex; gap: 60px; }
.btns svg { width: 60px; height: 60px; }
.track { margin: 20px 0 0 -3px; font-size: 38px; font-weight: 300; line-height: 56px; white-space: nowrap; }
.big { margin-top: 36px; }
```
